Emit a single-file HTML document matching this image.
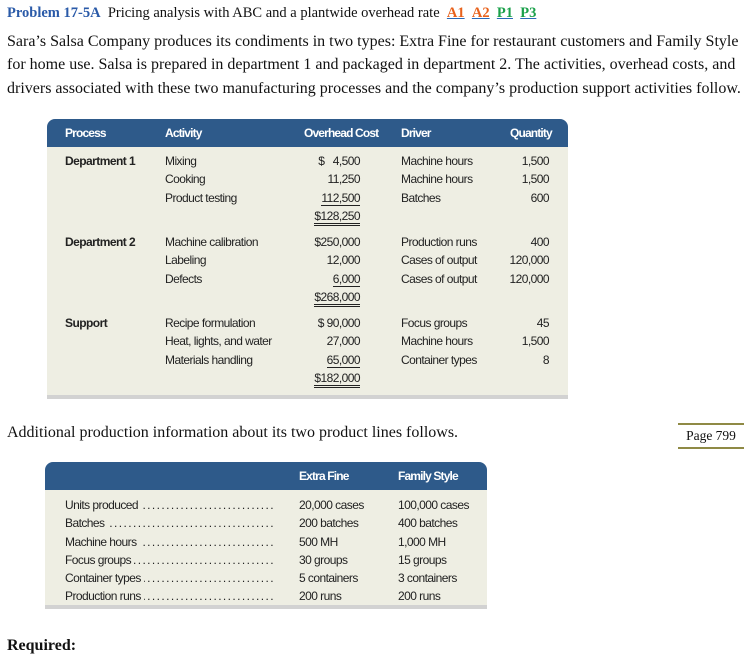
<!DOCTYPE html>
<html><head><meta charset="utf-8"><style>
body{margin:0;width:752px;height:643px;overflow:hidden;background:#fff;position:relative;font-family:"Liberation Serif",serif;color:#111}
.a{position:absolute;white-space:nowrap}
.n{font-family:"Liberation Sans",sans-serif;font-size:12px;color:#222;letter-spacing:-0.55px;line-height:18.3px}
.h{font-family:"Liberation Sans",sans-serif;font-size:12px;color:#fff;font-weight:bold;letter-spacing:-0.85px}
.b{font-weight:bold;color:#222}
.r{text-align:right}
.p{font-size:16px;left:7px;color:#111}
.u{border-bottom:1px solid #222}
.dd{border-bottom:3px double #222}
.row{display:flex;width:210px;height:18.3px;overflow:hidden}
.row .f{flex:1;overflow:hidden;direction:rtl;letter-spacing:1.4px;margin-left:3px}
</style></head><body>
<div class="a" style="left:7px;top:5px;font-size:14.5px"><span style="color:#2a5aa8;font-weight:bold">Problem 17-5A</span>&nbsp; Pricing analysis with ABC and a plantwide overhead rate &nbsp;<b style="color:#e8621c;text-decoration:underline;text-decoration-color:#2a6ab8">A1</b> &nbsp;<b style="color:#e8621c;text-decoration:underline;text-decoration-color:#2a6ab8">A2</b> &nbsp;<b style="color:#1aa04a;text-decoration:underline;text-decoration-color:#2a6ab8">P1</b> &nbsp;<b style="color:#1aa04a;text-decoration:underline;text-decoration-color:#2a6ab8">P3</b></div>
<div class="a p" style="top:33px">Sara’s Salsa Company produces its condiments in two types: Extra Fine for restaurant customers and Family Style</div>
<div class="a p" style="top:56px">for home use. Salsa is prepared in department 1 and packaged in department 2. The activities, overhead costs, and</div>
<div class="a p" style="top:80px">drivers associated with these two manufacturing processes and the company’s production support activities follow.</div>

<div class="a" style="left:47px;top:119px;width:521px;height:28px;background:#2e5a8a;border-radius:8px 8px 0 0"></div>
<div class="a" style="left:47px;top:147px;width:521px;height:248px;background:#eeeee3"></div>
<div class="a" style="left:47px;top:395px;width:521px;height:4px;background:#d2d2d2"></div>
<div class="a h" style="left:65px;top:126px">Process</div>
<div class="a h" style="left:165px;top:126px">Activity</div>
<div class="a h" style="left:304px;top:126px">Overhead Cost</div>
<div class="a h" style="left:401px;top:126px">Driver</div>
<div class="a h" style="left:510px;top:126px">Quantity</div>

<div class="a n b" style="left:65px;top:152px">Department 1</div>
<div class="a n" style="left:165px;top:152px">Mixing<br>Cooking<br>Product testing</div>
<div class="a n r" style="left:280px;width:80px;top:152px">$&nbsp;&nbsp;&nbsp;4,500<br>11,250<br><span class="u">112,500</span><br><span class="dd">$128,250</span></div>
<div class="a n" style="left:401px;top:152px">Machine hours<br>Machine hours<br>Batches</div>
<div class="a n r" style="left:480px;width:69px;top:152px">1,500<br>1,500<br>600</div>

<div class="a n b" style="left:65px;top:233px">Department 2</div>
<div class="a n" style="left:165px;top:233px">Machine calibration<br>Labeling<br>Defects</div>
<div class="a n r" style="left:280px;width:80px;top:233px">$250,000<br>12,000<br><span class="u">6,000</span><br><span class="dd">$268,000</span></div>
<div class="a n" style="left:401px;top:233px">Production runs<br>Cases of output<br>Cases of output</div>
<div class="a n r" style="left:480px;width:69px;top:233px">400<br>120,000<br>120,000</div>

<div class="a n b" style="left:65px;top:314px">Support</div>
<div class="a n" style="left:165px;top:314px">Recipe formulation<br>Heat, lights, and water<br>Materials handling</div>
<div class="a n r" style="left:280px;width:80px;top:314px">$&nbsp;90,000<br>27,000<br><span class="u">65,000</span><br><span class="dd">$182,000</span></div>
<div class="a n" style="left:401px;top:314px">Focus groups<br>Machine hours<br>Container types</div>
<div class="a n r" style="left:480px;width:69px;top:314px">45<br>1,500<br>8</div>

<div class="a" style="left:7px;top:424px;font-size:16px">Additional production information about its two product lines follows.</div>
<div class="a" style="left:678px;top:423px;width:66px;height:22px;border-top:2px solid #8f8a45;border-bottom:2px solid #8f8a45;font-size:13.5px;text-align:center;line-height:22px">Page 799</div>

<div class="a" style="left:45px;top:462px;width:442px;height:28px;background:#2e5a8a;border-radius:8px 8px 0 0"></div>
<div class="a" style="left:45px;top:490px;width:442px;height:115px;background:#eeeee3"></div>
<div class="a" style="left:45px;top:605px;width:442px;height:4px;background:#d2d2d2"></div>
<div class="a h" style="left:299px;top:469px">Extra Fine</div>
<div class="a h" style="left:398px;top:469px">Family Style</div>
<div class="a n" style="left:65px;top:496px">
<div class="row"><span>Units produced</span><span class="f">..............................................</span></div>
<div class="row"><span>Batches</span><span class="f">..............................................</span></div>
<div class="row"><span>Machine hours</span><span class="f">..............................................</span></div>
<div class="row"><span>Focus groups</span><span class="f">..............................................</span></div>
<div class="row"><span>Container types</span><span class="f">..............................................</span></div>
<div class="row"><span>Production runs</span><span class="f">..............................................</span></div>
</div>
<div class="a n" style="left:299px;top:496px">20,000 cases<br>200 batches<br>500 MH<br>30 groups<br>5 containers<br>200 runs</div>
<div class="a n" style="left:398px;top:496px">100,000 cases<br>400 batches<br>1,000 MH<br>15 groups<br>3 containers<br>200 runs</div>
<div class="a" style="left:7px;top:637px;font-size:16px;font-weight:bold">Required:</div>
</body></html>
